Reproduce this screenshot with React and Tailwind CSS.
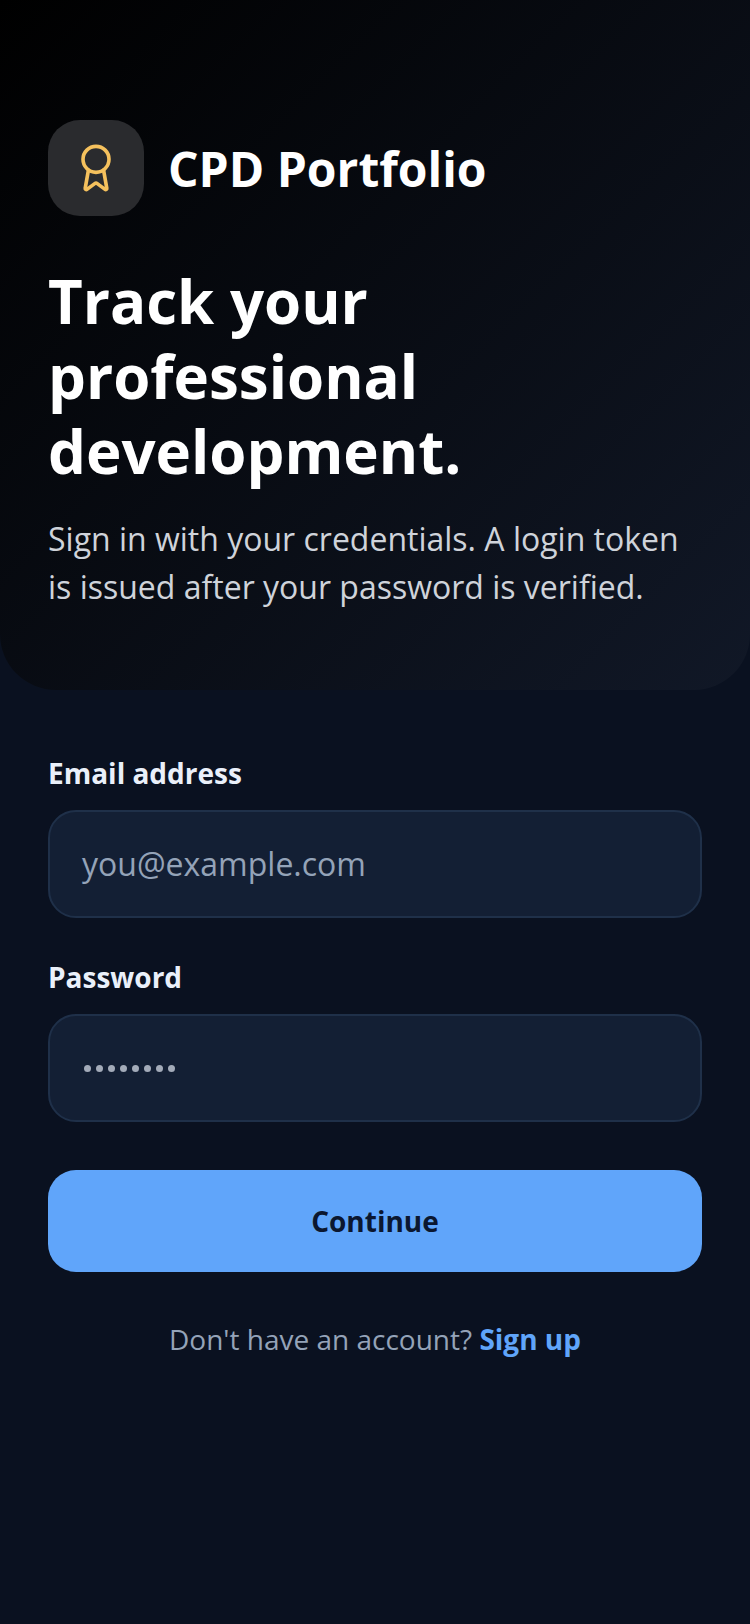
import React from "react"
import { Award } from "lucide-react"

const Field = ({ label, children }) => (
    <div>
        <label className="block text-[28px] leading-[38px] font-bold text-[#eaf0fa]">{label}</label>
        <div className="mt-[18px] h-[108px] rounded-[28px] border-2 border-[#1f3049] bg-[#131f34] px-[32px] flex items-center">
            {children}
        </div>
    </div>
)

export default function App() {
    return (
        <div className="min-h-[1624px] bg-[#0a1120] font-['Open_Sans',sans-serif]">
            <div className="h-[690px] rounded-b-[56px] bg-[linear-gradient(135deg,#000000,#111827)] px-[48px] pt-[120px]">
                <div className="flex items-center gap-[24px]">
                    <div className="w-[96px] h-[96px] rounded-[32px] bg-[#2a2b2e] flex items-center justify-center">
                        <Award size={52} strokeWidth={1.67} color="#f5c15d" />
                    </div>
                    <div className="text-[48px] leading-[64px] font-bold text-white mt-[2px]">CPD Portfolio</div>
                </div>
                <h1 className="mt-[48px] text-[60px] leading-[75px] font-bold text-white">
                    Track your<br />professional<br />development.
                </h1>
                <p className="mt-[26px] text-[32px] leading-[48px] text-[#cfd3da]">
                    Sign in with your credentials. A login token<br />is issued after your password is verified.
                </p>
            </div>
            <div className="px-[48px] pt-[64px]">
                <Field label="Email address">
                    <span className="text-[32px] text-[#94a3b8]">you@example.com</span>
                </Field>
                <div className="mt-[40px]">
                    <Field label="Password">
                        <div className="flex gap-[5px] pl-[2px]">
                            {[0, 1, 2, 3, 4, 5, 6, 7].map((i) => (
                                <span key={i} className="w-[7px] h-[7px] rounded-full bg-[#a3abb9]"></span>
                            ))}
                        </div>
                    </Field>
                </div>
                <button type="button" className="mt-[48px] w-full h-[102px] rounded-[28px] bg-[#60a5fa] text-[28px] font-bold text-[#0b1730]">
                    Continue
                </button>
                <p className="mt-[47px] text-center text-[28px] leading-[40px] text-[#94a3b8]">
                    Don't have an account? <span className="font-bold text-[#60a5fa]">Sign up</span>
                </p>
            </div>
        </div>
    )
}
